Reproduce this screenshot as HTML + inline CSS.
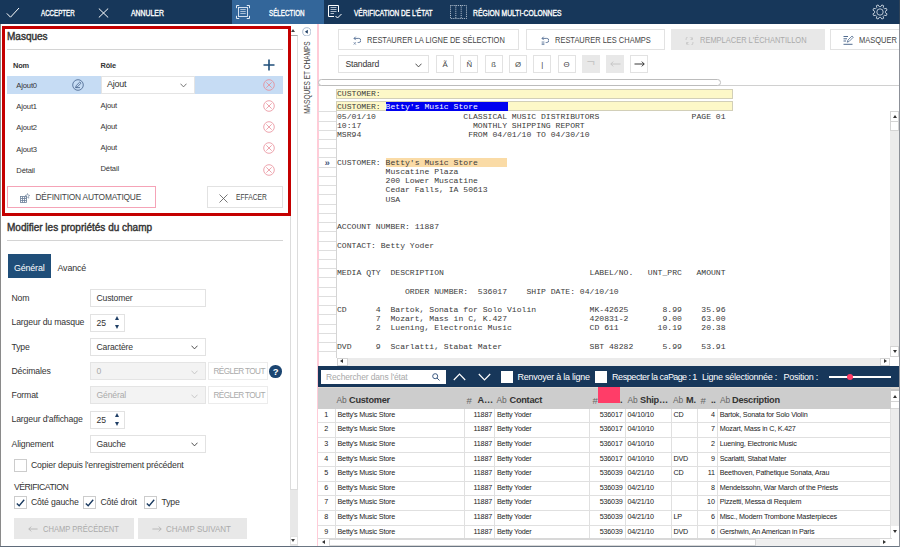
<!DOCTYPE html>
<html lang="fr">
<head>
<meta charset="utf-8">
<title>Masques et champs</title>
<style>
*{box-sizing:border-box;margin:0;padding:0}
html,body{width:900px;height:547px;overflow:hidden;background:#fff}
body{position:relative;font-family:"Liberation Sans",sans-serif;font-size:8px;color:#333;-webkit-font-smoothing:antialiased}
div,span,i,pre,svg{position:absolute;display:block}
i{font-style:normal}
/* ---------- top bar ---------- */
#top{left:0;top:0;width:899px;height:24px;background:#17375a}
#top .seltab{left:232px;top:0;width:92px;height:24px;background:#33669a}
#top .t{color:#fff;font-size:8.6px;font-weight:normal;-webkit-text-stroke:0.35px #fff;top:7.5px;line-height:10px;white-space:nowrap;transform:scaleX(.8);transform-origin:0 50%}
/* ---------- left panel ---------- */
#left{left:0;top:24px;width:299px;height:523px;background:#fff}
#left .edge{left:0;top:0;width:1px;height:523px;background:#8a8a8a}
#redbox{left:2px;top:2.2px;width:289.2px;height:189.7px;border:3px solid #c40000;z-index:5}
.h1{font-size:10px;font-weight:normal;-webkit-text-stroke:0.4px #333;color:#333;white-space:nowrap;letter-spacing:0}
.hr{height:1px;background:#d4d4d4;left:7px;width:276px}
.lbl{font-size:7.6px;color:#333;white-space:nowrap;line-height:10px;letter-spacing:-0.15px}
.inp{background:#fff;border:1px solid #e2e2e2;height:18px}
.inp.dis{background:#f3f3f3;border-color:#e4e4e4}
.inp span{left:6px;top:3.2px;font-size:8.6px;line-height:10px;white-space:nowrap;letter-spacing:-0.15px}
.fl{font-size:8.7px;color:#333;white-space:nowrap;line-height:10px;letter-spacing:-0.15px}
.inp.dis span{color:#aaa}
.btn{border:1px solid #e2e2e2;background:#fff;font-size:8.4px;color:#444;white-space:nowrap}
.btn.dis{background:#e8e8e8;border-color:#e8e8e8;color:#aaa}
.btn span{line-height:10px;letter-spacing:-0.2px}
.btn.tb span{margin-top:-0.7px;font-size:8.6px;letter-spacing:0;transform:scaleX(.87);transform-origin:0 50%}
.cb{width:12.5px;height:12.5px;border:1px solid #ccc;background:#fff}
/* ---------- scrollbars ---------- */
.sb{background:#e8e8e8}
.sb .th{background:#fff;border:1px solid #dadada}
.arr{width:0;height:0;border:2.5px solid transparent}
/* ---------- report ---------- */
#report{left:337px;top:111.8px;font-family:"Liberation Mono",monospace;font-size:8.1px;line-height:9.21px;color:#3a3a3a;white-space:pre;position:absolute}
#report .hl{position:static;display:inline;background:#fadba6}
.mono{font-family:"Liberation Mono",monospace;font-size:8.1px;line-height:9.21px;color:#3a3a3a;white-space:pre}
#gut i{left:0;width:18px;height:1px;background:#dedede}
/* ---------- table ---------- */
#tbl{left:318px;top:388.4px;width:572.7px;height:150px;background:#fff;overflow:hidden}
#tbl .hd{left:0;top:0;width:573.5px;height:20.2px;background:#cdcdcd}
#tbl .hd span{top:5.3px;line-height:13px;white-space:nowrap}
#tbl .hd .ab{font-size:8.4px;color:#666;top:5.3px}
#tbl .hd .b{font-size:9.2px;font-weight:bold;color:#333;letter-spacing:-0.25px}
.tr{left:0;width:573.5px;height:14.65px;border-bottom:1px solid #e0e0e0}
.tr .c{top:0;height:14.65px;line-height:12.2px;font-size:7.2px;letter-spacing:-0.2px;color:#1a1a1a;white-space:nowrap;border-right:1px solid #e0e0e0;padding:0 2px;overflow:hidden}
.c0{left:0;width:17.5px;text-align:center}
.c1{left:17.5px;width:129.5px}
.c2{left:147px;width:30px;text-align:right}
.c3{left:177px;width:94.5px}
.c4{left:271.5px;width:36px;text-align:right}
.c5{left:307.5px;width:46px}
.c6{left:353.5px;width:26px}
.c7{left:379.5px;width:20.2px;text-align:right}
.c8{left:399.7px;width:173.8px}
.sl{top:5.5px;font-size:9px;line-height:10px;color:#fff;white-space:nowrap;letter-spacing:-0.25px}
</style>
</head>
<body>

<!-- ================= TOP BAR ================= -->
<div id="top">
  <div class="seltab"></div>
  <svg style="left:6px;top:6.5px" width="14" height="11.5" viewBox="0 0 14 11.5"><path d="M0.8 6.4 L4.5 10.2 L13 1" fill="none" stroke="#fff" stroke-width="1"/></svg>
  <span class="t" style="left:40.5px;transform:scaleX(0.72)">ACCEPTER</span>
  <svg style="left:97.5px;top:7.5px" width="11" height="10" viewBox="0 0 11 10"><path d="M0.8 0.5 L10.2 9.5 M10.2 0.5 L0.8 9.5" fill="none" stroke="#fff" stroke-width="1"/></svg>
  <span class="t" style="left:130.5px;transform:scaleX(0.8)">ANNULER</span>
  <svg style="left:236px;top:5px" width="14" height="14" viewBox="0 0 14 14" fill="none" stroke="#e3ebf5" stroke-width="1"><path d="M0.5 3.2 V0.5 H3.2 M10.8 0.5 H13.5 V3.2 M13.5 10.8 V13.5 H10.8 M3.2 13.5 H0.5 V10.8"/><rect x="2.5" y="2.5" width="9" height="9" stroke-width="0.9"/><path d="M4.3 4.5 H9.7 M4.3 6.5 H9.7 M4.3 8.5 H9.7" stroke-width="0.8" stroke="#c9d7e8"/></svg>
  <span class="t" style="left:269.3px;transform:scaleX(0.73)">SÉLECTION</span>
  <svg style="left:328px;top:5px" width="14" height="14" viewBox="0 0 14 14" fill="none" stroke="#fff" stroke-width="1"><path d="M6 11.5 H0.5 V0.5 H10.5 V7"/><path d="M2.5 2.5 H8.5 M2.5 4.5 H8.5 M2.5 6.5 H8.5 M2.5 8.5 H6" stroke-width="0.8" stroke="#d5dde8"/><path d="M7.5 11 L9.5 13 L13.5 9"/></svg>
  <span class="t" style="left:354px;transform:scaleX(0.76)">VÉRIFICATION DE L'ÉTAT</span>
  <svg style="left:450px;top:5px" width="17" height="14" viewBox="0 0 17 14" fill="none" stroke="#c3cedb" stroke-width="0.9" stroke-dasharray="1 0.9"><rect x="0.5" y="0.5" width="16" height="13"/><path d="M5.8 0.5 V13.5 M11.2 0.5 V13.5"/></svg>
  <span class="t" style="left:473px;transform:scaleX(0.786)">RÉGION MULTI-COLONNES</span>
  <svg style="left:871.8px;top:4.4px" width="16" height="16" viewBox="0 0 16 16" fill="none" stroke="#bcc7d4" stroke-width="1" stroke-linejoin="round"><circle cx="8" cy="8" r="3.2"/><path d="M8.86 2.57 L9.87 0.94 L11.67 1.69 L11.23 3.55 L12.45 4.77 L14.31 4.33 L15.06 6.13 L13.43 7.14 L13.43 8.86 L15.06 9.87 L14.31 11.67 L12.45 11.23 L11.23 12.45 L11.67 14.31 L9.87 15.06 L8.86 13.43 L7.14 13.43 L6.13 15.06 L4.33 14.31 L4.77 12.45 L3.55 11.23 L1.69 11.67 L0.94 9.87 L2.57 8.86 L2.57 7.14 L0.94 6.13 L1.69 4.33 L3.55 4.77 L4.77 3.55 L4.33 1.69 L6.13 0.94 L7.14 2.57 Z"/></svg>
</div>
<div style="left:899px;top:0;width:1px;height:547px;background:#8c9098;z-index:9"></div>
<div style="left:899px;top:0;width:1px;height:24px;background:#2f4257;z-index:10"></div>

<!-- ================= LEFT PANEL ================= -->
<div id="left">
  <div class="edge"></div>
  <div id="redbox"></div>
  <span class="h1" style="left:7px;top:6px;line-height:13px">Masques</span>
  <div class="hr" style="top:24.5px"></div>
  <span class="lbl" style="left:13px;top:36.7px;font-weight:bold;font-size:7.4px">Nom</span>
  <span class="lbl" style="left:100.5px;top:36.7px;font-weight:bold;font-size:7.4px">Rôle</span>
  <svg style="left:263px;top:35px" width="12" height="12" viewBox="0 0 12 12"><path d="M6 0.5 V11.5 M0.5 6 H11.5" stroke="#1f4e79" stroke-width="1.6" fill="none"/></svg>

  <!-- selected row -->
  <div style="left:7px;top:52px;width:276px;height:17.6px;background:#c6dcf4"></div>
  <span class="lbl" style="left:16.3px;top:56.5px">Ajout0</span>
  <svg style="left:71.6px;top:54.7px" width="12" height="12" viewBox="0 0 12 12" fill="none" stroke="#44618a" stroke-width="0.8"><circle cx="6" cy="6" r="5.3"/><path d="M3.6 8.6 L4.2 6.6 L7.8 3 L9 4.2 L5.4 7.8 Z M3.6 8.6 H8"/></svg>
  <div class="inp" style="left:100.5px;top:52px;width:94px;height:17.6px;border-color:#e4e4e4"><span style="font-size:9px;top:1.9px;left:5.4px;letter-spacing:-0.2px">Ajout</span>
    <svg style="left:78px;top:5.5px" width="7" height="5" viewBox="0 0 7 5"><path d="M0.5 0.7 L3.5 3.9 L6.5 0.7" fill="none" stroke="#555" stroke-width="0.8"/></svg></div>
  <svg class="del" style="left:262.5px;top:54.5px" width="12" height="12" viewBox="0 0 12 12" fill="none" stroke="#e58f9a" stroke-width="0.85"><circle cx="6" cy="6" r="5.3"/><path d="M3.3 3.3 L8.7 8.7 M8.7 3.3 L3.3 8.7"/></svg>

  <span class="lbl" style="left:16.3px;top:78px">Ajout1</span><span class="lbl" style="left:100.5px;top:76.5px">Ajout</span>
  <svg style="left:262.5px;top:75.8px" width="12" height="12" viewBox="0 0 12 12" fill="none" stroke="#ea959f" stroke-width="0.85"><circle cx="6" cy="6" r="5.3"/><path d="M3.3 3.3 L8.7 8.7 M8.7 3.3 L3.3 8.7"/></svg>
  <span class="lbl" style="left:16.3px;top:99.3px">Ajout2</span><span class="lbl" style="left:100.5px;top:97.8px">Ajout</span>
  <svg style="left:262.5px;top:97.1px" width="12" height="12" viewBox="0 0 12 12" fill="none" stroke="#ea959f" stroke-width="0.85"><circle cx="6" cy="6" r="5.3"/><path d="M3.3 3.3 L8.7 8.7 M8.7 3.3 L3.3 8.7"/></svg>
  <span class="lbl" style="left:16.3px;top:120.6px">Ajout3</span><span class="lbl" style="left:100.5px;top:119.1px">Ajout</span>
  <svg style="left:262.5px;top:118.4px" width="12" height="12" viewBox="0 0 12 12" fill="none" stroke="#ea959f" stroke-width="0.85"><circle cx="6" cy="6" r="5.3"/><path d="M3.3 3.3 L8.7 8.7 M8.7 3.3 L3.3 8.7"/></svg>
  <span class="lbl" style="left:16.3px;top:141.9px">Détail</span><span class="lbl" style="left:100.5px;top:140.4px">Détail</span>
  <svg style="left:262.5px;top:139.7px" width="12" height="12" viewBox="0 0 12 12" fill="none" stroke="#ea959f" stroke-width="0.85"><circle cx="6" cy="6" r="5.3"/><path d="M3.3 3.3 L8.7 8.7 M8.7 3.3 L3.3 8.7"/></svg>

  <div class="btn" style="left:7px;top:162.3px;width:149px;height:22px;border-color:#f5a3b7">
    <svg style="left:12px;top:6px" width="10" height="10" viewBox="0 0 10 10" fill="none" stroke="#6b7f99" stroke-width="0.8"><rect x="0.5" y="3.5" width="6" height="6"/><path d="M0.5 5.5 H6.5 M0.5 7.5 H6.5 M2.5 3.5 V9.5 M4.5 3.5 V9.5"/><path d="M7.5 0.5 L8.1 2.2 L9.8 2.4 L8.5 3.5 L8.9 5.2 L7.5 4.3 L6.1 5.2 L6.5 3.5 L5.2 2.4 L6.9 2.2 Z" stroke-width="0.6"/></svg>
    <span style="left:27.5px;top:4.6px">DÉFINITION AUTOMATIQUE</span></div>
  <div class="btn" style="left:207px;top:162.3px;width:76px;height:22px">
    <svg style="left:11px;top:6.5px" width="9" height="9" viewBox="0 0 9 9"><path d="M0.5 0.5 L8.5 8.5 M8.5 0.5 L0.5 8.5" fill="none" stroke="#555" stroke-width="0.8"/></svg>
    <span style="left:27.5px;top:4.6px;letter-spacing:0;transform:scaleX(.8);transform-origin:0 50%">EFFACER</span></div>

  <span class="h1" style="left:7px;top:196.7px;line-height:13px">Modifier les propriétés du champ</span>
  <div class="hr" style="top:216px"></div>

  <div style="left:8px;top:230.2px;width:43px;height:24px;background:#1f4e79"></div>
  <span class="lbl" style="left:14px;top:238.5px;color:#fff;font-size:8.9px">Général</span>
  <span class="lbl" style="left:57.5px;top:238.5px;font-size:8.9px">Avancé</span>

  <span class="fl" style="left:11.5px;top:269px">Nom</span>
  <div class="inp" style="left:89.5px;top:265.2px;width:116px"><span>Customer</span></div>

  <span class="fl" style="left:11.5px;top:293.3px">Largeur du masque</span>
  <div class="inp" style="left:89.5px;top:289.5px;width:35px"><span>25</span>
    <i class="arr" style="left:24.7px;top:1.4px;border-width:0 2.8px 4px 2.8px;border-bottom:4px solid #1f3f66"></i>
    <i class="arr" style="left:24.7px;top:10.3px;border-width:4px 2.8px 0 2.8px;border-top:4px solid #1f3f66"></i></div>

  <span class="fl" style="left:11.5px;top:317.5px">Type</span>
  <div class="inp" style="left:89.5px;top:313.8px;width:116px"><span>Caractère</span>
    <svg style="left:100px;top:6.7px" width="7" height="5" viewBox="0 0 7 5"><path d="M0.5 0.7 L3.5 3.9 L6.5 0.7" fill="none" stroke="#333" stroke-width="0.85"/></svg></div>

  <span class="fl" style="left:11.5px;top:341.7px">Décimales</span>
  <div class="inp dis" style="left:89.5px;top:338px;width:116px"><span>0</span>
    <svg style="left:100px;top:6.7px" width="7" height="5" viewBox="0 0 7 5"><path d="M0.5 0.7 L3.5 3.9 L6.5 0.7" fill="none" stroke="#c0c0c0" stroke-width="0.85"/></svg></div>
  <div class="btn" style="left:208px;top:338px;width:60px;height:18px;border-color:#ececec;color:#aaa;font-size:8.2px"><span style="left:4.5px;top:3.5px;letter-spacing:-0.6px">RÉGLER TOUT</span></div>
  <div style="left:269.3px;top:341.2px;width:12.6px;height:12.6px;border-radius:6.3px;background:#1b4571"></div>
  <span style="left:269.3px;top:342px;width:12.6px;text-align:center;color:#fff;font-weight:bold;font-size:9.5px;line-height:11px">?</span>

  <span class="fl" style="left:11.5px;top:366px">Format</span>
  <div class="inp dis" style="left:89.5px;top:362.2px;width:116px"><span>Général</span>
    <svg style="left:100px;top:6.7px" width="7" height="5" viewBox="0 0 7 5"><path d="M0.5 0.7 L3.5 3.9 L6.5 0.7" fill="none" stroke="#c0c0c0" stroke-width="0.85"/></svg></div>
  <div class="btn" style="left:208px;top:362.2px;width:60px;height:18px;border-color:#ececec;color:#aaa;font-size:8.2px"><span style="left:4.5px;top:3.5px;letter-spacing:-0.6px">RÉGLER TOUT</span></div>

  <span class="fl" style="left:11.5px;top:390.2px">Largeur d'affichage</span>
  <div class="inp" style="left:89.5px;top:386.5px;width:35px"><span>25</span>
    <i class="arr" style="left:24.7px;top:1.4px;border-width:0 2.8px 4px 2.8px;border-bottom:4px solid #1f3f66"></i>
    <i class="arr" style="left:24.7px;top:10.3px;border-width:4px 2.8px 0 2.8px;border-top:4px solid #1f3f66"></i></div>

  <span class="fl" style="left:11.5px;top:414.5px">Alignement</span>
  <div class="inp" style="left:89.5px;top:410.7px;width:116px"><span>Gauche</span>
    <svg style="left:100px;top:6.7px" width="7" height="5" viewBox="0 0 7 5"><path d="M0.5 0.7 L3.5 3.9 L6.5 0.7" fill="none" stroke="#333" stroke-width="0.85"/></svg></div>

  <div class="cb" style="left:14px;top:435.2px"></div>
  <span class="fl" style="left:31px;top:436.3px">Copier depuis l'enregistrement précédent</span>

  <span class="fl" style="left:14px;top:458px;letter-spacing:-0.5px">VÉRIFICATION</span>
  <div class="cb" style="left:14px;top:472px"></div>
  <svg style="left:16px;top:474.5px" width="9" height="8" viewBox="0 0 9 8"><path d="M0.8 4.4 L3.2 6.8 L8.2 0.8" fill="none" stroke="#1a3a60" stroke-width="1.35"/></svg>
  <span class="fl" style="left:31px;top:473.3px">Côté gauche</span>
  <div class="cb" style="left:83px;top:472px"></div>
  <svg style="left:85px;top:474.5px" width="9" height="8" viewBox="0 0 9 8"><path d="M0.8 4.4 L3.2 6.8 L8.2 0.8" fill="none" stroke="#1a3a60" stroke-width="1.35"/></svg>
  <span class="fl" style="left:100.5px;top:473.3px">Côté droit</span>
  <div class="cb" style="left:144px;top:472px"></div>
  <svg style="left:146px;top:474.5px" width="9" height="8" viewBox="0 0 9 8"><path d="M0.8 4.4 L3.2 6.8 L8.2 0.8" fill="none" stroke="#1a3a60" stroke-width="1.35"/></svg>
  <span class="fl" style="left:161.5px;top:473.3px">Type</span>

  <div class="btn dis" style="left:14px;top:493.6px;width:120.3px;height:21.8px"><svg style="left:12.5px;top:7.8px" width="10" height="6" viewBox="0 0 10 6"><path d="M9.6 3 H0.8 M3.2 0.6 L0.8 3 L3.2 5.4" fill="none" stroke="#b4b4b4" stroke-width="0.9"/></svg><span style="left:27.5px;top:5.5px;font-size:8.6px;letter-spacing:0;transform:scaleX(.88);transform-origin:0 50%">CHAMP PRÉCÉDENT</span></div>
  <div class="btn dis" style="left:137.7px;top:493.6px;width:109px;height:21.8px"><svg style="left:13px;top:7.8px" width="10" height="6" viewBox="0 0 10 6"><path d="M0.4 3 H9.2 M6.8 0.6 L9.2 3 L6.8 5.4" fill="none" stroke="#b4b4b4" stroke-width="0.9"/></svg><span style="left:27px;top:5.5px;font-size:8.6px;letter-spacing:0;transform:scaleX(.93);transform-origin:0 50%">CHAMP SUIVANT</span></div>

  <!-- left scrollbar -->
  <div class="sb" style="left:289.6px;top:1.5px;width:8.7px;height:520px">
    <div class="th" style="left:0;top:9.5px;width:8.7px;height:454.8px;border-color:#dcdcdc;border-top-color:#a8a8a8"></div>
    <div style="left:0;top:0;width:8.7px;height:9.5px;background:#fff"></div>
    <i class="arr" style="left:1.7px;top:3.2px;border-bottom:3px solid #444;border-top-width:0"></i>
    <div style="left:0;top:510.3px;width:8.7px;height:9.7px;background:#fff;border:1px solid #e2e2e2"></div>
    <i class="arr" style="left:1.7px;top:513.5px;border-top:3px solid #444;border-bottom-width:0"></i>
  </div>
  <div style="left:0;top:521.8px;width:299px;height:1.2px;background:#5f6b7a"></div>
</div>

<!-- ================= VERTICAL STRIP ================= -->
<div style="left:299px;top:24px;width:19px;height:523px;background:#fff">
    <svg style="left:2.7px;top:2.6px" width="9.6" height="9.6" viewBox="0 0 9.6 9.6"><circle cx="4.8" cy="4.8" r="4.1" fill="none" stroke="#8aa0bd" stroke-width="0.7"/><path d="M5.8 2.8 L2.9 4.8 L5.8 6.8 Z" fill="#1f3f66"/></svg>
  <span style="left:-34.5px;top:52px;width:84px;height:10px;line-height:10px;font-size:8.4px;color:#444;white-space:nowrap;transform:rotate(-90deg) scaleX(.78);text-align:center">MASQUES ET CHAMPS</span>
  <div style="left:18.2px;top:0;width:1.6px;height:523px;background:#ffccd8"></div>
</div>

<!-- ================= RIGHT: TOOLBAR ================= -->
<div class="btn tb" style="left:338.4px;top:29.4px;width:181px;height:20.8px">
  <svg style="left:13.5px;top:5.8px" width="8.5" height="9.4" viewBox="0 0 10 11" fill="none" stroke="#4a678f" stroke-width="1"><path d="M3.2 0.8 L1.2 2.8 L3.2 4.8 M1.2 2.8 H6.8 A2.4 2.4 0 0 1 6.8 7.6 H5.5"/><path d="M0.8 7.2 L3.4 10.2 M3.4 7.2 L0.8 10.2" stroke-width="0.7"/></svg>
  <span style="left:28px;top:5px">RESTAURER LA LIGNE DE SÉLECTION</span></div>
<div class="btn tb" style="left:526.2px;top:29.4px;width:138.6px;height:20.8px">
  <svg style="left:13.5px;top:5.8px" width="8.5" height="9.4" viewBox="0 0 10 11" fill="none" stroke="#4a678f" stroke-width="1"><path d="M3.2 0.8 L1.2 2.8 L3.2 4.8 M1.2 2.8 H6.8 A2.4 2.4 0 0 1 6.8 7.6 H5.5"/><path d="M0.8 7 H4 M0.8 8.5 H4 M0.8 10 H4" stroke-width="0.8"/></svg>
  <span style="left:28px;top:5px">RESTAURER LES CHAMPS</span></div>
<div class="btn dis tb" style="left:671px;top:29.4px;width:153.5px;height:20.8px">
  <svg style="left:13px;top:6.5px" width="9" height="8" viewBox="0 0 9 8" fill="none" stroke="#c4c4c4" stroke-width="0.8"><path d="M1 3 A3 3 0 0 1 7 2 M8 5 A3 3 0 0 1 2 6"/><path d="M7.5 0.5 V2.5 H5.5 M1.5 7.5 V5.5 H3.5"/></svg>
  <span style="left:28px;top:5px">REMPLACER L'ÉCHANTILLON</span></div>
<div class="btn tb" style="left:830.3px;top:29.4px;width:72px;height:20.8px">
  <svg style="left:12px;top:5px" width="11" height="10" viewBox="0 0 11 10" fill="none" stroke="#3c5a82" stroke-width="0.9"><path d="M0.5 9.3 H9.5 M0.5 1.5 H5 M0.5 3.8 H4 M0.5 6 H3"/><path d="M4.2 7.2 L5 5 L9 1 L10.3 2.2 L6.3 6.3 Z" stroke-width="0.7"/></svg>
  <span style="left:28px;top:5px">MASQUER</span></div>

<div class="inp" style="left:338.4px;top:55.3px;width:90.6px;height:18px"><span style="left:6px;top:2.8px">Standard</span>
  <svg style="left:76px;top:6.7px" width="7" height="5" viewBox="0 0 7 5"><path d="M0.5 0.7 L3.5 3.9 L6.5 0.7" fill="none" stroke="#333" stroke-width="0.85"/></svg></div>
<div class="btn sm" style="left:436px;top:55.3px;width:18px;height:18px"><span style="left:0;width:16px;text-align:center;top:3.8px;font-size:7.8px">Ã</span></div>
<div class="btn sm" style="left:460.3px;top:55.3px;width:18px;height:18px"><span style="left:0;width:16px;text-align:center;top:3.8px;font-size:7.8px">Ñ</span></div>
<div class="btn sm" style="left:484.6px;top:55.3px;width:18px;height:18px"><span style="left:0;width:16px;text-align:center;top:3.8px;font-size:7.8px">ß</span></div>
<div class="btn sm" style="left:508.9px;top:55.3px;width:18px;height:18px"><span style="left:0;width:16px;text-align:center;top:3.8px;font-size:7.8px">Ø</span></div>
<div class="btn sm" style="left:533.2px;top:55.3px;width:18px;height:18px"><span style="left:0;width:16px;text-align:center;top:3.8px;font-size:7.8px">|</span></div>
<div class="btn sm" style="left:557.5px;top:55.3px;width:18px;height:18px"><span style="left:0;width:16px;text-align:center;top:3.8px;font-size:7.8px">Θ</span></div>
<div class="btn sm dis" style="left:581.8px;top:55.3px;width:18px;height:18px"><span style="left:0;width:16px;text-align:center;top:0.5px;font-size:14px;color:#c6c6c6">¬</span></div>
<div class="btn sm dis" style="left:606.1px;top:55.3px;width:18px;height:18px"><svg style="left:3px;top:5px" width="11" height="6" viewBox="0 0 11 6"><path d="M10.5 3 H0.8 M3.2 0.6 L0.8 3 L3.2 5.4" fill="none" stroke="#c2c2c2" stroke-width="0.9"/></svg></div>
<div class="btn sm" style="left:630.4px;top:55.3px;width:18px;height:18px"><svg style="left:3px;top:5px" width="11" height="6" viewBox="0 0 11 6"><path d="M0.5 3 H10.2 M7.8 0.6 L10.2 3 L7.8 5.4" fill="none" stroke="#222" stroke-width="0.9"/></svg></div>

<!-- ruler + line -->
<div style="left:318px;top:85px;width:581px;height:1px;background:#d0d0d0"></div>
<div style="left:318.3px;top:79.2px;width:403px;height:6.8px;border:1px solid #bcbcbc;border-radius:3.4px;background:#fff"></div>

<!-- ================= REPORT ================= -->
<div id="gut" style="left:318px;top:111.3px;width:19px;height:246.7px;overflow:hidden">
  <i style="top:0.0px"></i><i style="top:9.23px"></i><i style="top:18.46px"></i><i style="top:27.69px"></i><i style="top:36.92px"></i><i style="top:46.15px"></i><i style="top:55.38px"></i><i style="top:64.61px"></i><i style="top:73.84px"></i><i style="top:83.07px"></i><i style="top:92.3px"></i><i style="top:101.53px"></i><i style="top:110.76px"></i><i style="top:119.99px"></i><i style="top:129.22px"></i><i style="top:138.45px"></i><i style="top:147.68px"></i><i style="top:156.91px"></i><i style="top:166.14px"></i><i style="top:175.37px"></i><i style="top:184.6px"></i><i style="top:193.83px"></i><i style="top:203.06px"></i><i style="top:212.29px"></i><i style="top:221.52px"></i><i style="top:230.75px"></i><i style="top:239.98px"></i><i style="top:249.21px"></i>
  <div style="left:18px;top:0;width:1px;height:272px;background:#d4d4d4"></div>
</div>
<div style="left:336px;top:88.6px;width:397.2px;height:10px;background:#fdf8c8;border:1px solid #d2cfb8"></div>
<div style="left:336px;top:101.2px;width:397.2px;height:10.3px;background:#fdf8c8;border:1px solid #d2cfb8"></div>
<div style="left:385.6px;top:102px;width:122px;height:9px;background:#0000f0"></div>
<span class="mono" style="left:337px;top:88.8px">CUSTOMER:</span>
<span class="mono" style="left:337px;top:101.8px">CUSTOMER: <b style="color:#fff;font-weight:normal">Betty's Music Store</b></span>
<span class="mono" style="left:324.6px;top:158.8px;font-size:9.2px;color:#3f557a;font-weight:bold">»</span>
<pre id="report">05/01/10                  CLASSICAL MUSIC DISTRIBUTORS                   PAGE 01
10:17                       MONTHLY SHIPPING REPORT
MSR94                      FROM 04/01/10 TO 04/30/10


CUSTOMER: <span class="hl">Betty's Music Store      </span>
          Muscatine Plaza
          200 Lower Muscatine
          Cedar Falls, IA 50613
          USA


ACCOUNT NUMBER: 11887

CONTACT: Betty Yoder


MEDIA QTY  DESCRIPTION                              LABEL/NO.   UNT_PRC   AMOUNT

              ORDER NUMBER:  536017    SHIP DATE: 04/10/10

CD      4  Bartok, Sonata for Solo Violin           MK-42625       8.99    35.96
        7  Mozart, Mass in C, K.427                 420831-2       9.00    63.00
        2  Luening, Electronic Music                CD 611        10.19    20.38

DVD     9  Scarlatti, Stabat Mater                  SBT 48282      5.99    53.91</pre>

<!-- report scrollbars -->
<div class="sb" style="left:890.4px;top:111.3px;width:8.6px;height:246px;background:#ebebeb">
  <div style="left:0;top:0;width:8.6px;height:10.7px;border:1px solid #d4d4d4;background:#fff"></div>
  <i class="arr" style="left:2.4px;top:4.2px;border-bottom:3px solid #333;border-top-width:0"></i>
  <div style="left:0;top:10.2px;width:8.6px;height:10px;border:1px solid #d4d4d4;background:#fff"></div>
  <div style="left:0;top:35px;width:8.6px;height:10.6px;background:#fff;border:1px solid #d4d4d4;top:234.8px"></div>
  <i class="arr" style="left:2.4px;top:238.9px;border-top:3px solid #333;border-bottom-width:0"></i>
</div>
<div class="sb" style="left:336.5px;top:357.5px;width:553.9px;height:8.5px;background:#ebebeb">
  <div style="left:0;top:0;width:11.5px;height:8.5px;background:#fff;border:1px solid #d4d4d4"></div>
  <i class="arr" style="left:3.5px;top:1.8px;border-right:3px solid #333;border-left-width:0"></i>
  <div style="left:543.1px;top:0;width:10.8px;height:8.5px;background:#fff;border:1px solid #d4d4d4"></div>
  <i class="arr" style="left:547.2px;top:1.8px;border-left:3px solid #333;border-right-width:0"></i>
</div>

<!-- ================= SEARCH BAR ================= -->
<div style="left:318px;top:366.3px;width:581px;height:21px;background:#17375a">
  <div style="left:2.5px;top:3.8px;width:125px;height:14px;background:#fff"></div>
  <span style="left:8px;top:5.5px;font-size:8.5px;line-height:10px;color:#a9a9a9;white-space:nowrap;letter-spacing:-0.15px">Rechercher dans l'état</span>
  <svg style="left:114px;top:7px" width="8" height="8" viewBox="0 0 8 8" fill="none" stroke="#3c5a82" stroke-width="1"><circle cx="3.2" cy="3.2" r="2.5"/><path d="M5 5 L7.5 7.5"/></svg>
  <svg style="left:135px;top:7px" width="13" height="8" viewBox="0 0 13 8"><path d="M0.8 7 L6.5 1.2 L12.2 7" fill="none" stroke="#fff" stroke-width="1.2"/></svg>
  <svg style="left:159.5px;top:7px" width="13" height="8" viewBox="0 0 13 8"><path d="M0.8 1 L6.5 6.8 L12.2 1" fill="none" stroke="#fff" stroke-width="1.2"/></svg>
  <div style="left:182.5px;top:4.8px;width:12.3px;height:12.3px;background:#fff"></div>
  <span class="sl" style="left:199.5px">Renvoyer à la ligne</span>
  <div style="left:276.5px;top:4.8px;width:12.3px;height:12.3px;background:#fff"></div>
  <span class="sl" style="left:294px;width:56px;overflow:hidden;letter-spacing:-0.42px">Respecter la ca</span>
  <span class="sl" style="left:349.9px;letter-spacing:-0.6px">Page : 1</span>
  <span class="sl" style="left:384px">Ligne sélectionnée :</span>
  <span class="sl" style="left:465.5px">Position :</span>
  <div style="left:510.5px;top:10.2px;width:62px;height:1.4px;background:#fff"></div>
  <div style="left:528.5px;top:7.8px;width:6px;height:6px;border-radius:3px;background:#ff3d68"></div>
</div>

<!-- ================= TABLE ================= -->
<div style="left:318.5px;top:387.3px;width:580.5px;height:1.3px;background:#dcd8d2"></div>
<div style="left:318.5px;top:388.5px;width:580.5px;height:2.8px;background:#c7c7c7"></div>
<div id="tbl">
  <div class="hd">
    <span class="ab" style="left:18.4px">Ab</span><span class="b" style="left:31px">Customer</span>
    <span class="ab" style="left:148.5px;font-size:9.6px">#</span><span class="b" style="left:159.5px">A…</span>
    <span class="ab" style="left:178.5px">Ab</span><span class="b" style="left:191.5px">Contact</span>
    <span class="ab" style="left:274.5px;font-size:9.6px">#</span><span class="b" style="left:302px">.</span>
    <span class="ab" style="left:309.5px">Ab</span><span class="b" style="left:322px">Ship…</span>
    <span class="ab" style="left:355px">Ab</span><span class="b" style="left:368px">M.</span>
    <span class="ab" style="left:382.5px;font-size:9.6px">#</span><span class="b" style="left:393px">..</span>
    <span class="ab" style="left:402px">Ab</span><span class="b" style="left:414px">Description</span>
  </div>
  <div class="tr" style="top:20.2px"><span class="c c0">1</span><span class="c c1">Betty's Music Store</span><span class="c c2">11887</span><span class="c c3">Betty Yoder</span><span class="c c4">536017</span><span class="c c5">04/10/10</span><span class="c c6">CD</span><span class="c c7">4</span><span class="c c8">Bartok, Sonata for Solo Violin</span></div>
<div class="tr" style="top:34.85px"><span class="c c0">2</span><span class="c c1">Betty's Music Store</span><span class="c c2">11887</span><span class="c c3">Betty Yoder</span><span class="c c4">536017</span><span class="c c5">04/10/10</span><span class="c c6"></span><span class="c c7">7</span><span class="c c8">Mozart, Mass in C, K.427</span></div>
<div class="tr" style="top:49.5px"><span class="c c0">3</span><span class="c c1">Betty's Music Store</span><span class="c c2">11887</span><span class="c c3">Betty Yoder</span><span class="c c4">536017</span><span class="c c5">04/10/10</span><span class="c c6"></span><span class="c c7">2</span><span class="c c8">Luening, Electronic Music</span></div>
<div class="tr" style="top:64.15px"><span class="c c0">4</span><span class="c c1">Betty's Music Store</span><span class="c c2">11887</span><span class="c c3">Betty Yoder</span><span class="c c4">536017</span><span class="c c5">04/10/10</span><span class="c c6">DVD</span><span class="c c7">9</span><span class="c c8">Scarlatti, Stabat Mater</span></div>
<div class="tr" style="top:78.8px"><span class="c c0">5</span><span class="c c1">Betty's Music Store</span><span class="c c2">11887</span><span class="c c3">Betty Yoder</span><span class="c c4">536039</span><span class="c c5">04/21/10</span><span class="c c6">CD</span><span class="c c7">11</span><span class="c c8">Beethoven, Pathetique Sonata, Arau</span></div>
<div class="tr" style="top:93.45px"><span class="c c0">6</span><span class="c c1">Betty's Music Store</span><span class="c c2">11887</span><span class="c c3">Betty Yoder</span><span class="c c4">536039</span><span class="c c5">04/21/10</span><span class="c c6"></span><span class="c c7">8</span><span class="c c8">Mendelssohn, War March of the Priests</span></div>
<div class="tr" style="top:108.1px"><span class="c c0">7</span><span class="c c1">Betty's Music Store</span><span class="c c2">11887</span><span class="c c3">Betty Yoder</span><span class="c c4">536039</span><span class="c c5">04/21/10</span><span class="c c6"></span><span class="c c7">10</span><span class="c c8">Pizzetti, Messa di Requiem</span></div>
<div class="tr" style="top:122.75px"><span class="c c0">8</span><span class="c c1">Betty's Music Store</span><span class="c c2">11887</span><span class="c c3">Betty Yoder</span><span class="c c4">536039</span><span class="c c5">04/21/10</span><span class="c c6">LP</span><span class="c c7">6</span><span class="c c8">Misc., Modern Trombone Masterpieces</span></div>
<div class="tr" style="top:137.4px"><span class="c c0">9</span><span class="c c1">Betty's Music Store</span><span class="c c2">11887</span><span class="c c3">Betty Yoder</span><span class="c c4">536039</span><span class="c c5">04/21/10</span><span class="c c6">DVD</span><span class="c c7">6</span><span class="c c8">Gershwin, An American in Paris</span></div>

</div>
<div style="left:598.4px;top:387.3px;width:21.6px;height:15.7px;background:#ff3d68"></div>
<!-- table scrollbars -->
<div class="sb" style="left:890.7px;top:391.3px;width:8.3px;height:146.5px;background:#ececec">
  <div style="left:0;top:0;width:8.3px;height:10.4px;background:#fff;border-bottom:1px solid #d4d4d4"></div>
  <i class="arr" style="left:2.1px;top:3.9px;border-bottom:3px solid #333;border-top-width:0"></i>
  <div style="left:0;top:10.4px;width:8.3px;height:7px;border-bottom:1px solid #d8d8d8;background:#fff"></div>
  <div style="left:0;top:135px;width:8.3px;height:11.5px;background:#fff"></div>
  <i class="arr" style="left:2.1px;top:139px;border-top:3px solid #333;border-bottom-width:0"></i>
</div>
<div class="sb" style="left:318px;top:538px;width:573.5px;height:7.5px;background:#fff;border-top:1px solid #d8d8d8">
  <i class="arr" style="left:3.7px;top:1px;border-right:3px solid #333;border-left-width:0"></i>
  <div style="left:11px;top:0;width:426.5px;height:7px;border:1px solid #d8d8d8;background:#fff"></div>
  <div style="left:437.5px;top:0;width:124px;height:7px;background:#efefef"></div>
  <i class="arr" style="left:565px;top:0.5px;border-left:3px solid #333;border-right-width:0"></i>
</div>
<div style="left:299px;top:545.8px;width:600px;height:1.2px;background:#6b7683"></div>

</body>
</html>
